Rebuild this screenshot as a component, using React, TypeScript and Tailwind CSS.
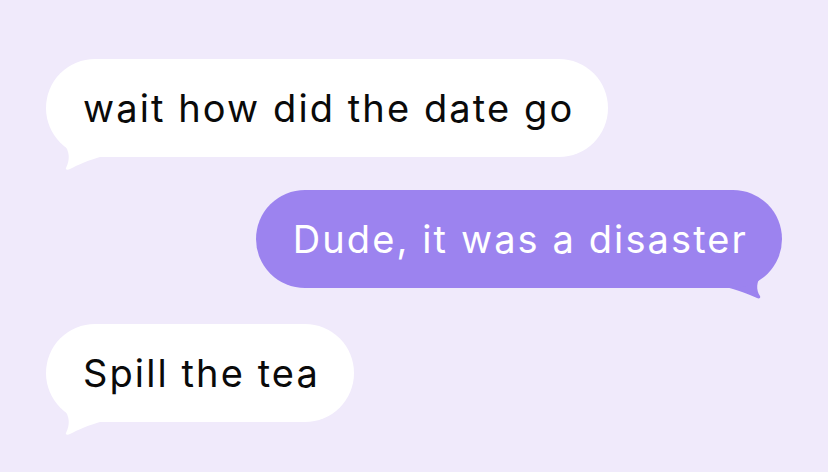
import React from 'react';

type Side = 'left' | 'right';

function Tail({ side, color }: { side: Side; color: string }) {
  // little speech tail hanging under the bubble's bottom corner
  if (side === 'left') {
    return (
      <svg className="absolute left-[14px] bottom-[-13px]" width="44" height="26" viewBox="0 0 44 26">
        <path d="M4 0 C10 8 10 16 6 24 C5 26 8 26 10 25 C18 21 28 16 44 12 L44 0 Z" fill={color} />
      </svg>
    );
  }
  return (
    <svg className="absolute right-[16px] bottom-[-12px]" width="44" height="26" viewBox="0 0 44 26">
      <path d="M40 0 C34 8 34 16 38 22 C39 24 37 25 35 24 C26 20 16 16 0 12 L0 0 Z" fill={color} />
    </svg>
  );
}

function Bubble({ text, side, className = '' }: { text: string; side: Side; className?: string }) {
  const mine = side === 'right';
  return (
    <div className={`relative ${mine ? 'self-end' : 'self-start'} ${className}`}>
      <div
        className={`relative z-10 rounded-full pl-[37px] pr-[34px] h-[98px] flex items-center text-[38px] tracking-[2.1px] ${
          mine ? 'bg-[#9c83ef] text-white' : 'bg-white text-[#0a0a0a]'
        }`}
      >
        {text}
      </div>
      <Tail side={side} color={mine ? '#9c83ef' : '#ffffff'} />
    </div>
  );
}

export default function App() {
  return (
    <div
      className="w-[828px] h-[472px] bg-[#f0eafb] flex flex-col px-[46px] pt-[59px] overflow-hidden"
      style={{ fontFamily: 'Inter, "Noto Sans", sans-serif' }}
    >
      <Bubble side="left" text="wait how did the date go" />
      <Bubble side="right" text="Dude, it was a disaster" className="mt-[33px]" />
      <Bubble side="left" text="Spill the tea" className="mt-[36px]" />
    </div>
  );
}
